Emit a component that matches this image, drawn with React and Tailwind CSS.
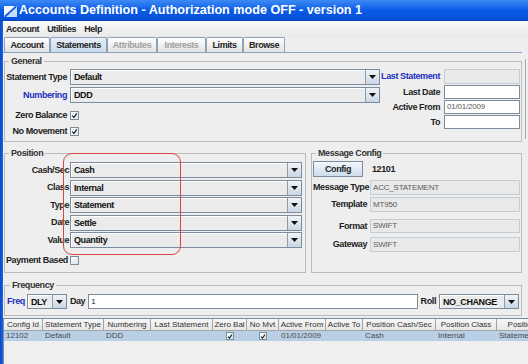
const LBL = "font-bold text-[9px] tracking-[-0.4px] text-[#222] leading-none whitespace-nowrap";
const LEGEND = "ml-[3px] px-[2px] leading-[11px] font-bold text-[9px] tracking-[-0.4px] text-[#333]";

function Arrow() {
  return (
    <svg width="7" height="4" viewBox="0 0 7 4">
      <path d="M0 0H7L3.5 4Z" fill="#111" />
    </svg>
  );
}

function Combo({ value, className = "" }) {
  return (
    <div className={`flex border border-[#7d8c9c] bg-[#ebebeb] ${className}`}>
      <div className="flex-1 flex items-center pl-[2px] border-t border-l border-white font-bold text-[9px] tracking-[-0.4px] text-[#111] leading-none">
        {value}
      </div>
      <div className="w-[14px] border-l border-[#8d9cab] bg-gradient-to-b from-[#f0f4f8] to-[#c9d7e5] flex items-center justify-center">
        <Arrow />
      </div>
    </div>
  );
}

function Field({ value = "", kind = "white", className = "" }) {
  const look =
    kind === "white"
      ? "border-[#7d8c9c] bg-white"
      : "border-[#c4ccd4] bg-[#e9e9e9]";
  return (
    <div className={`flex items-center border pl-[2px] text-[8px] tracking-[-0.2px] text-[#5a5a5a] leading-none ${look} ${className}`}>
      {value}
    </div>
  );
}

function Check({ checked, small }) {
  return (
    <span
      className={`inline-flex items-center justify-center border border-[#7d8c9c] bg-gradient-to-br from-white to-[#d9e3ed] ${
        small ? "w-[8px] h-[8px]" : "w-[9px] h-[9px]"
      }`}
    >
      {checked && (
        <svg width="7" height="7" viewBox="0 0 7 7">
          <path d="M1.2 3.6L2.9 5.3L5.8 1.3" stroke="#222" strokeWidth="1.3" fill="none" />
        </svg>
      )}
    </span>
  );
}

const tabs = [
  { name: "Account", w: "w-[46px]" },
  { name: "Statements", w: "w-[57px]", active: true },
  { name: "Attributes", w: "w-[50px]", off: true },
  { name: "Interests", w: "w-[49px]", off: true },
  { name: "Limits", w: "w-[37px]" },
  { name: "Browse", w: "w-[42px]" },
];

const cols = [
  "Config Id",
  "Statement Type",
  "Numbering",
  "Last Statement",
  "Zero Bal",
  "No Mvt",
  "Active From",
  "Active To",
  "Position Cash/Sec",
  "Position Class",
  "Position Type",
];

const row = ["12102", "Default", "DDD", "", "check", "check", "01/01/2009", "", "Cash", "Internal", "Statement"];

export default function App() {
  return (
    <div className="relative w-[528px] h-[364px] overflow-hidden bg-[#eeeeee] flex flex-col font-['Liberation_Sans',Arial,sans-serif]">
      {/* title bar */}
      <div className="h-[21px] shrink-0 flex items-center bg-gradient-to-b from-[#3d8af4] via-[#0a5ce8] to-[#064fd8] border-b border-[#0a44b8]">
        <svg width="13" height="13" viewBox="0 0 13 13" className="ml-[4px]">
          <path d="M0 2H11L0 13Z" fill="#f2f6ff" />
          <path d="M13 2V13H2Z" fill="#c8dcff" />
          <path d="M1 12L12 3" stroke="#1d5fd6" strokeWidth="1.6" />
        </svg>
        <span className="ml-[2px] text-white font-bold text-[12.6px] leading-none whitespace-nowrap">
          Accounts Definition - Authorization mode OFF - version 1
        </span>
      </div>

      <div className="flex flex-1 min-h-0">
        <div className="w-[3px] shrink-0 bg-gradient-to-r from-[#0a48c8] to-[#1c64e6]" />
        <div className="flex-1 flex flex-col min-w-0">
          {/* menu */}
          <div className="h-[16px] shrink-0 flex items-center gap-[8px] pl-[3px] bg-gradient-to-b from-[#fbfbfb] to-[#e8e8e8]">
            {["Account", "Utilities", "Help"].map((m) => (
              <span key={m} className={LBL}>
                {m}
              </span>
            ))}
          </div>

          {/* tabs */}
          <div className="h-[16px] w-[519px] shrink-0 flex items-end pl-[1px] border-b border-[#8da2b8]">
            {tabs.map((t) => (
              <div
                key={t.name}
                className={`${t.w} h-[15px] flex items-center justify-center border border-b-0 border-[#8ea1b5] rounded-t-[2px] font-bold text-[9px] tracking-[-0.4px] leading-none ${
                  t.active
                    ? "bg-gradient-to-b from-[#e6eef7] to-[#c9dbed] text-[#222]"
                    : "bg-gradient-to-b from-white to-[#e2e2e2]"
                } ${t.off ? "text-[#a0a0a0]" : "text-[#222]"}`}
              >
                {t.name}
              </div>
            ))}
          </div>

          {/* General */}
          <div className="flex mt-[3px]">
            <fieldset className="ml-[1px] w-[518px] border border-[#bcbcbc] px-[1px] pb-[2px]">
              <legend className={LEGEND}>General</legend>
              <div className="flex pt-[2px]">
                <div className="w-[374px] flex flex-col">
                  <div className="flex h-[16px] items-center">
                    <span className={`${LBL} w-[64px] pr-[3px] text-right`}>Statement Type</span>
                    <Combo value="Default" className="flex-1 h-[16px]" />
                  </div>
                  <div className="flex h-[16px] items-center mt-[2px]">
                    <span className={`${LBL} w-[64px] pr-[3px] text-right !text-[#1a2fc0]`}>Numbering</span>
                    <Combo value="DDD" className="flex-1 h-[16px]" />
                  </div>
                  <div className="flex h-[16px] items-center mt-[4px]">
                    <span className={`${LBL} w-[64px] pr-[3px] text-right`}>Zero Balance</span>
                    <Check checked />
                  </div>
                  <div className="flex h-[16px] items-center">
                    <span className={`${LBL} w-[64px] pr-[3px] text-right`}>No Movement</span>
                    <Check checked />
                  </div>
                </div>
                <div className="flex-1 flex flex-col">
                  <div className="flex h-[15px] items-center">
                    <span className={`${LBL} flex-1 pr-[4px] text-right !text-[#1a2fc0]`}>Last Statement</span>
                    <Field kind="gray" className="w-[76px] h-[15px]" />
                  </div>
                  <div className="flex h-[14px] items-center mt-[1px]">
                    <span className={`${LBL} flex-1 pr-[4px] text-right`}>Last Date</span>
                    <Field className="w-[76px] h-[14px]" />
                  </div>
                  <div className="flex h-[14px] items-center mt-[1px]">
                    <span className={`${LBL} flex-1 pr-[4px] text-right`}>Active From</span>
                    <Field value="01/01/2009" className="w-[76px] h-[14px]" />
                  </div>
                  <div className="flex h-[14px] items-center mt-[1px]">
                    <span className={`${LBL} flex-1 pr-[4px] text-right`}>To</span>
                    <Field className="w-[76px] h-[14px]" />
                  </div>
                </div>
              </div>
            </fieldset>
            <div className="ml-[3px] w-[1px] my-[3px] bg-[#a8a8a8]" />
          </div>

          {/* Position + Message Config */}
          <div className="flex mt-[6px]">
            <fieldset className="ml-[1px] w-[302px] border border-[#bcbcbc] pl-[1px] pr-[3px] pb-[4px]">
              <legend className={LEGEND}>Position</legend>
              <div className="flex flex-col gap-[1.5px] pt-[3px]">
                {[
                  ["Cash/Sec", "Cash"],
                  ["Class", "Internal"],
                  ["Type", "Statement"],
                  ["Date", "Settle"],
                  ["Value", "Quantity"],
                ].map(([l, v]) => (
                  <div key={l} className="flex h-[16px] items-center">
                    <span className={`${LBL} w-[64px] pr-[1px] text-right`}>{l}</span>
                    <Combo value={v} className="flex-1 h-[16px]" />
                  </div>
                ))}
              </div>
              <div className="flex h-[16px] items-center mt-[4px] gap-[2px]">
                <span className={LBL}>Payment Based</span>
                <Check />
              </div>
            </fieldset>

            <fieldset className="ml-[5px] w-[211px] border border-[#bcbcbc] pl-[1px] pr-[1px] pb-[20px]">
              <legend className={LEGEND}>Message Config</legend>
              <div className="flex items-center pt-[2px]">
                <div className="w-[50px] h-[16px] flex items-center justify-center border border-[#7d8c9c] bg-gradient-to-b from-[#f4f8fc] to-[#cddcec] font-bold text-[9px] tracking-[-0.4px] text-[#222] leading-none">
                  Config
                </div>
                <span className={`${LBL} ml-[9px]`}>12101</span>
              </div>
              {[
                ["Message Type", "ACC_STATEMENT", "mt-[3px] h-[15px]"],
                ["Template", "MT950", "mt-[2px] h-[15px]"],
                ["Format", "SWIFT", "mt-[7px] h-[14px]"],
                ["Gateway", "SWIFT", "mt-[4px] h-[15px]"],
              ].map(([l, v, c]) => (
                <div key={l} className={`flex items-center ${c}`}>
                  <span className={`${LBL} w-[57px] pr-[3px] text-right`}>{l}</span>
                  <Field value={v} kind="gray" className="flex-1 h-full" />
                </div>
              ))}
            </fieldset>
          </div>

          {/* Frequency */}
          <fieldset className="ml-[1px] mt-[7px] w-[518px] border border-[#bcbcbc] pl-[2px] pr-[2px] pb-[6px]">
            <legend className={LEGEND}>Frequency</legend>
            <div className="flex items-center h-[15px] mt-[3px]">
              <span className={`${LBL} !text-[#1a2fc0]`}>Freq</span>
              <Combo value="DLY" className="ml-[2px] w-[40px] h-[15px]" />
              <span className={`${LBL} ml-[3px]`}>Day</span>
              <div className="ml-[3px] flex-1 h-[15px] flex items-center border border-[#7d8c9c] bg-white pl-[2px] text-[8px] text-[#222] leading-none">
                1
              </div>
              <span className={`${LBL} ml-[3px]`}>Roll</span>
              <Combo value="NO_CHANGE" className="ml-[3px] w-[80px] h-[15px]" />
            </div>
          </fieldset>

          {/* table */}
          <div className="mt-[2px] flex-1 border-l border-t border-[#7d8c9c] bg-[#efefef] overflow-hidden">
            <div className="grid grid-cols-[39px_61px_47px_62px_34px_32px_47px_37px_73px_61px_70px] w-max">
              {cols.map((c) => (
                <div
                  key={c}
                  className="h-[12px] flex items-center justify-center overflow-hidden whitespace-nowrap border-r border-b border-[#a3a3a3] bg-gradient-to-b from-[#f7f7f7] to-[#e6e6e6] text-[8px] text-[#333] leading-none"
                >
                  {c}
                </div>
              ))}
              {row.map((v, i) => (
                <div
                  key={i}
                  className={`h-[10px] flex items-center overflow-hidden whitespace-nowrap border-r border-[#c5d3e1] bg-[#b8cfe5] text-[8px] text-[#4a4a4a] leading-none ${
                    v === "check" ? "justify-center" : "pl-[2px]"
                  }`}
                >
                  {v === "check" ? <Check checked small /> : v}
                </div>
              ))}
            </div>
          </div>
        </div>
      </div>

      {/* red annotation */}
      <div className="absolute left-[63px] top-[153px] w-[118px] h-[102px] border border-[#d64545] rounded-[9px] pointer-events-none" />
    </div>
  );
}
